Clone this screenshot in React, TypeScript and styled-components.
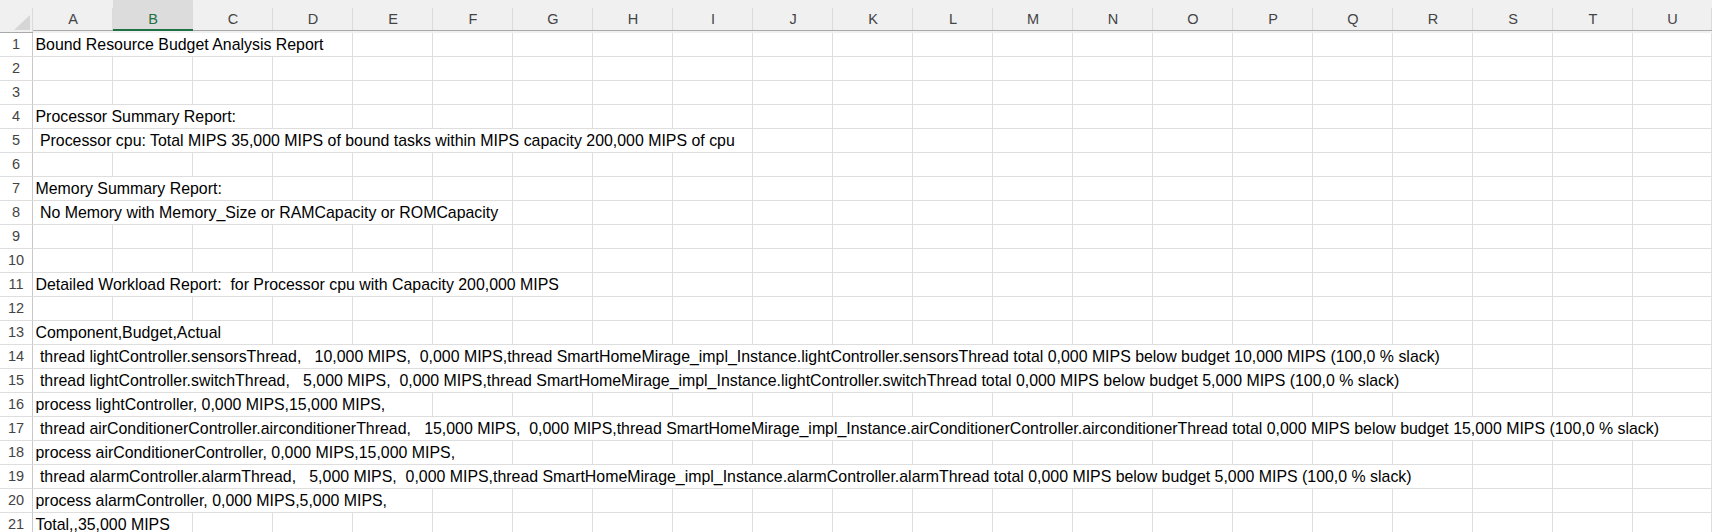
import React from 'react'
import styled, { createGlobalStyle } from 'styled-components'

const GlobalStyle = createGlobalStyle`
	html, body {
		margin: 0;
		padding: 0;
		background: #FFFFFF;
		overflow: hidden;
	}
	body {
		font-family: 'Liberation Sans', Arial, sans-serif;
	}
`

const GRID = '#DEDEDE'
const TRACKS = '33px repeat(20, 80px) 79px'

const COLUMNS = 'ABCDEFGHIJKLMNOPQRSTU'.split('')
const SELECTED_COLUMN = 'B'

const LINES: string[] = [
	'Bound Resource Budget Analysis Report',
	'',
	'',
	'Processor Summary Report:',
	' Processor cpu: Total MIPS 35,000 MIPS of bound tasks within MIPS capacity 200,000 MIPS of cpu',
	'',
	'Memory Summary Report:',
	' No Memory with Memory_Size or RAMCapacity or ROMCapacity',
	'',
	'',
	'Detailed Workload Report:  for Processor cpu with Capacity 200,000 MIPS',
	'',
	'Component,Budget,Actual',
	' thread lightController.sensorsThread,   10,000 MIPS,  0,000 MIPS,thread SmartHomeMirage_impl_Instance.lightController.sensorsThread total 0,000 MIPS below budget 10,000 MIPS (100,0 % slack)',
	' thread lightController.switchThread,   5,000 MIPS,  0,000 MIPS,thread SmartHomeMirage_impl_Instance.lightController.switchThread total 0,000 MIPS below budget 5,000 MIPS (100,0 % slack)',
	'process lightController, 0,000 MIPS,15,000 MIPS,',
	' thread airConditionerController.airconditionerThread,   15,000 MIPS,  0,000 MIPS,thread SmartHomeMirage_impl_Instance.airConditionerController.airconditionerThread total 0,000 MIPS below budget 15,000 MIPS (100,0 % slack)',
	'process airConditionerController, 0,000 MIPS,15,000 MIPS,',
	' thread alarmController.alarmThread,   5,000 MIPS,  0,000 MIPS,thread SmartHomeMirage_impl_Instance.alarmController.alarmThread total 0,000 MIPS below budget 5,000 MIPS (100,0 % slack)',
	'process alarmController, 0,000 MIPS,5,000 MIPS,',
	'Total,,35,000 MIPS',
]

const Sheet = styled.div`
	width: 1712px;
	height: 532px;
	overflow: hidden;
	background: #FFFFFF;
`
const HeaderRow = styled.div`
	display: grid;
	grid-template-columns: ${TRACKS};
	background: #F0F0F0;
`
const Corner = styled.div`
	height: 30px;
	border-bottom: 1px solid #A9A9A9;
	display: flex;
	align-items: flex-end;
	justify-content: flex-end;
	padding: 0 3px 2px 0;
	box-sizing: content-box;
	background: linear-gradient(#DADADA, #DADADA) right 8px / 1px calc(100% - 8px) no-repeat, #F0F0F0;
`
const ColumnHeader = styled.div<{ $selected?: boolean }>`
	height: 30px;
	box-sizing: border-box;
	padding-top: 8px;
	line-height: 22px;
	text-align: center;
	font-size: 14.5px;
	color: ${p => p.$selected ? '#1E7145' : '#444444'};
	border-bottom: 1px solid ${p => p.$selected ? '#1E7145' : '#A9A9A9'};
	box-shadow: ${p => p.$selected ? 'inset 0 -1px 0 #1E7145' : 'none'};
	background: linear-gradient(#DADADA, #DADADA) right 8px / 1px calc(100% - 8px) no-repeat,
		${p => p.$selected ? '#DCDCDC' : '#F0F0F0'};
	height: 31px;
`
const Row = styled.div`
	display: grid;
	grid-template-columns: ${TRACKS};
`
const RowNumber = styled.div`
	height: 23px;
	line-height: 23px;
	text-align: center;
	font-size: 14.5px;
	color: #444444;
	border-right: 1px solid #C9C9C9;
	border-bottom: 1px solid ${GRID};
`
const Cell = styled.div`
	height: 23px;
	min-width: 0;
	border-right: 1px solid ${GRID};
	border-bottom: 1px solid ${GRID};
`
const CellText = styled.span`
	display: inline-block;
	position: relative;
	z-index: 1;
	height: 23px;
	line-height: 23px;
	padding: 0 2px 0 2.5px;
	background: #FFFFFF;
	white-space: pre;
	font-size: 15.9px;
	color: #000000;
`

const CornerMark = () => (
	<svg width="16" height="15" viewBox="0 0 16 15">
		<polygon points="16,0 16,15 0,15" fill="#D6D6D6" />
	</svg>
)

const App = () => {
	return (
		<Sheet>
			<GlobalStyle />
			<HeaderRow>
				<Corner><CornerMark /></Corner>
				{COLUMNS.map(c => (
					<ColumnHeader key={c} $selected={c === SELECTED_COLUMN}>{c}</ColumnHeader>
				))}
			</HeaderRow>
			{LINES.map((text, i) => (
				<Row key={i}>
					<RowNumber>{i + 1}</RowNumber>
					{COLUMNS.map((c, j) => (
						<Cell key={c}>
							{j === 0 && text ? <CellText>{text}</CellText> : null}
						</Cell>
					))}
				</Row>
			))}
		</Sheet>
	)
}

export default App
